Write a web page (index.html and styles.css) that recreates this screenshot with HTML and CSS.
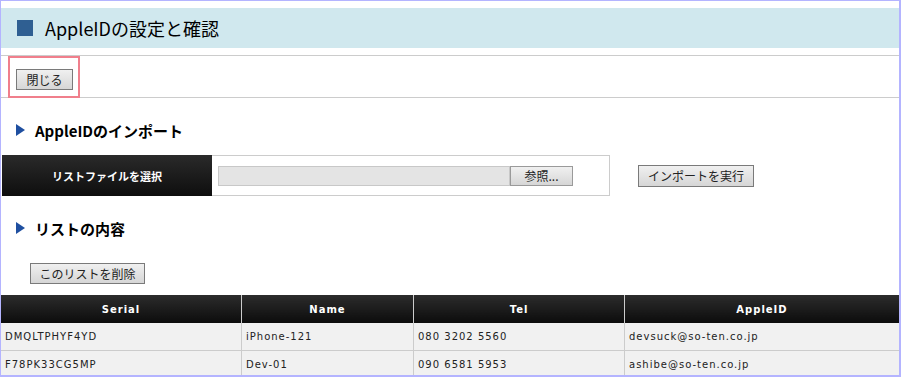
FILE: index.html
```html
<!DOCTYPE html>
<html lang="ja">
<head>
<meta charset="utf-8">
<link rel="stylesheet" href="styles.css">
</head>
<body>
<div class="frame">
  <div class="title-bar">
    <span class="title-mark"></span>
    <h1 class="title">AppleIDの設定と確認</h1>
  </div>
  <div class="close-row">
    <div class="close-focus"><button class="btn btn-close">閉じる</button></div>
  </div>
  <h2 class="section-head"><span class="tri"></span>AppleIDのインポート</h2>
  <div class="import-row">
    <div class="import-box">
      <div class="import-label">リストファイルを選択</div>
      <div class="import-field">
        <span class="file-path"></span><button class="btn btn-browse">参照...</button>
      </div>
    </div>
    <button class="btn btn-import">インポートを実行</button>
  </div>
  <h2 class="section-head"><span class="tri"></span>リストの内容</h2>
  <div class="delete-row"><button class="btn btn-delete">このリストを削除</button></div>
  <table class="list">
    <thead>
      <tr><th class="c1">Serial</th><th class="c2">Name</th><th class="c3">Tel</th><th class="c4">AppleID</th></tr>
    </thead>
    <tbody>
      <tr><td>DMQLTPHYF4YD</td><td>iPhone-121</td><td>080 3202 5560</td><td>devsuck@so-ten.co.jp</td></tr>
      <tr><td>F78PK33CG5MP</td><td>Dev-01</td><td>090 6581 5953</td><td>ashibe@so-ten.co.jp</td></tr>
    </tbody>
  </table>
</div>
</body>
</html>
```

FILE: styles.css
```css
html, body {
  margin: 0;
  padding: 0;
  background: #fff;
  font-family: "Noto Sans CJK JP", "Noto Sans", sans-serif;
  color: #000;
}
.frame {
  width: 901px;
  height: 377px;
  box-sizing: border-box;
  border-top: 1px solid #b4b4ff;
  border-left: 1px solid #b4b4ff;
  border-right: 2px solid #b4b4ff;
  border-bottom: 2px solid #b4b4ff;
  padding-top: 7px;
  overflow: hidden;
}
.title-bar {
  height: 40px;
  background: #d0e8ee;
  display: flex;
  align-items: center;
  padding-left: 16px;
  border-bottom: 7px solid #fff;
}
.title-mark {
  width: 16px;
  height: 16px;
  background: #2f5f92;
  margin-right: 12px;
}
.title {
  margin: 0;
  font-size: 18px;
  font-weight: normal;
  line-height: 1;
}
.close-row {
  border-top: 1px solid #cccccc;
  border-bottom: 1px solid #cccccc;
  height: 41px;
  padding-left: 7px;
  display: flex;
  align-items: flex-start;
}
.close-focus {
  border: 2px solid #f07f8c;
  height: 42px;
  width: 72px;
  padding: 8px 0 0 6px;
  box-sizing: border-box;
}
.btn {
  font-family: "Noto Sans CJK JP", sans-serif;
  font-size: 12px;
  color: #222;
  background: linear-gradient(#f0f0f0, #d6d6d6);
  border: 1px solid #7a7a7a;
  padding: 0;
  height: 21px;
  line-height: 19px;
}
.btn-close { width: 57px; }
.section-head {
  margin: 0;
  display: flex;
  align-items: center;
  font-size: 15px;
  font-weight: bold;
  height: 24px;
  padding-left: 15px;
}
.section-head:first-of-type { margin-top: 20px; }
.tri {
  width: 0;
  height: 0;
  border-top: 6px solid transparent;
  border-bottom: 6px solid transparent;
  border-left: 9px solid #1f4fa0;
  margin-right: 10px;
}
.import-row {
  display: flex;
  align-items: center;
  margin-top: 13px;
  padding-left: 1px;
  margin-bottom: 20px;
}
.import-box {
  display: flex;
  border: 1px solid #cccccc;
  border-left: none;
  height: 41px;
  box-sizing: border-box;
  width: 608px;
}
.import-label {
  width: 210px;
  background: linear-gradient(#2a2a2a, #0e0e0e);
  color: #fff;
  font-size: 11px;
  font-weight: bold;
  display: flex;
  align-items: center;
  justify-content: center;
  margin-top: -1px;
  margin-bottom: -1px;
}
.import-field {
  display: flex;
  align-items: center;
  padding-left: 6px;
}
.file-path {
  width: 292px;
  height: 20px;
  box-sizing: border-box;
  background: #e4e4e4;
  border: 1px solid #c8c8c8;
}
.btn-browse {
  width: 63px;
  height: 20px;
  line-height: 18px;
  border-color: #9a9a9a;
}
.btn-import {
  margin-left: 28px;
  width: 116px;
  height: 22px;
}
.delete-row {
  padding-left: 29px;
  margin-top: 20px;
  height: 35px;
}
.btn-delete { width: 115px; }
.list {
  border-collapse: collapse;
  width: 898px;
  margin-left: 0;
  font-family: "DejaVu Sans", sans-serif;
  font-size: 10px;
  letter-spacing: 1px;
}
.list th {
  height: 28px;
  background: linear-gradient(#2c2c2c, #0c0c0c);
  color: #fff;
  font-weight: bold;
  font-size: 10px;
  border-left: 1px solid #ccc;
  padding: 0;
}
.list th:first-child, .list td:first-child { border-left: none; }
.list td {
  height: 27px;
  background: #f1f1f1;
  border-left: 1px solid #ccc;
  border-bottom: 1px solid #ccc;
  padding: 0 0 0 4px;
  color: #222;
}
.c1 { width: 240px; }
.c2 { width: 171px; }
.c3 { width: 210px; }
```
